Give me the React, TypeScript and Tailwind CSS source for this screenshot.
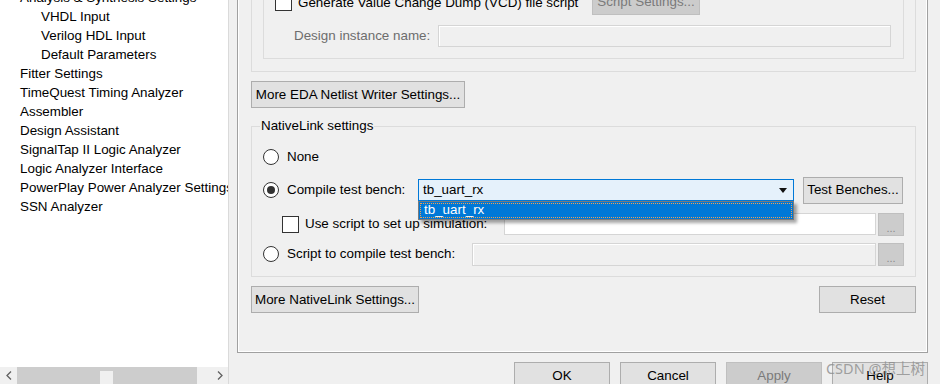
import React from "react"

const tree: [string, number][] = [
  ["Analysis & Synthesis Settings", 1],
  ["VHDL Input", 2],
  ["Verilog HDL Input", 2],
  ["Default Parameters", 2],
  ["Fitter Settings", 1],
  ["TimeQuest Timing Analyzer", 1],
  ["Assembler", 1],
  ["Design Assistant", 1],
  ["SignalTap II Logic Analyzer", 1],
  ["Logic Analyzer Interface", 1],
  ["PowerPlay Power Analyzer Settings", 1],
  ["SSN Analyzer", 1],
]

function Radio({ checked }: { checked?: boolean }) {
  return (
    <span className="w-4 h-4 shrink-0 rounded-full border border-[#333] bg-white flex items-center justify-center">
      {checked && <span className="w-2 h-2 rounded-full bg-[#333]" />}
    </span>
  )
}

function Check() {
  return <span className="w-[17px] h-[17px] shrink-0 border border-[#333] bg-white" />
}

function Btn({ label, className = "", disabled }: { label: string; className?: string; disabled?: boolean }) {
  return (
    <div
      className={`h-[27px] shrink-0 flex items-center justify-center pt-[1px] border ${
        disabled ? "bg-[#cccccc] border-[#bfbfbf] text-[#7a7a7a]" : "bg-[#e1e1e1] border-[#adadad] text-black"
      } ${className}`}
    >
      {label}
    </div>
  )
}

function Dots() {
  return (
    <div className="w-[26px] h-[23px] ml-[2px] shrink-0 bg-[#cccccc] border border-[#bfbfbf] text-[#8a8a8a] text-[11px] flex items-end justify-center pb-[1px] leading-none">
      ...
    </div>
  )
}

export default function App() {
  return (
    <div className="relative w-[940px] h-[384px] overflow-hidden bg-[#f0f0f0] flex font-['Liberation_Sans',Arial,sans-serif] text-[13.4px] text-black">
      {/* Settings tree */}
      <div className="w-[229px] h-full shrink-0 bg-white border-r border-[#dadada] flex flex-col">
        <div className="flex-1 overflow-hidden">
          <div className="-mt-[11px] whitespace-nowrap">
            {tree.map(([name, level], i) => (
              <div key={name} className={`h-[19px] flex items-center relative ${level === 2 ? "pl-[41px]" : "pl-[20px]"}`}>
                {i === 0 && (
                  <svg className="absolute left-[1px] top-[6px]" width="8" height="6" viewBox="0 0 8 6">
                    <path d="M1 1 L4 4 L7 1" fill="none" stroke="#555" strokeWidth="1.2" />
                  </svg>
                )}
                {name}
              </div>
            ))}
          </div>
        </div>
        <div className="h-[17px] flex items-stretch bg-[#f0f0f0]">
          <div className="w-[17px] flex items-center justify-center">
            <svg width="6" height="9" viewBox="0 0 6 9">
              <path d="M5 0.5 L1 4.5 L5 8.5" fill="none" stroke="#606060" strokeWidth="1.3" />
            </svg>
          </div>
          <div className="w-[180px] bg-[#cdcdcd] pt-[4px]">
            <div className="ml-[83px] w-[13px] h-[13px] bg-[#f0f0f0]" />
          </div>
          <div className="flex-1" />
          <div className="w-[17px] flex items-center justify-center">
            <svg width="6" height="9" viewBox="0 0 6 9">
              <path d="M1 0.5 L5 4.5 L1 8.5" fill="none" stroke="#606060" strokeWidth="1.3" />
            </svg>
          </div>
        </div>
      </div>

      {/* Settings page */}
      <div className="flex-1 flex flex-col pl-[8px] pr-[12px]">
        <div className="h-[353px] shrink-0 border-x border-b border-[#a0a0a0] shadow-[inset_1px_0_0_#fff,inset_-1px_-1px_0_#fff] pl-[13px] pr-[11px]">
          {/* EDA netlist writer group (scrolled) */}
          <div className="h-[72px] border-x border-b border-[#dcdcdc] pl-[11px] pr-[11px]">
            <div className="h-[59px] border-x border-b border-[#dcdcdc] flex flex-col justify-end pb-[11px]">
              <div className="h-[22px] mb-[11px] flex items-end pl-[11px]">
                <div className="self-center flex items-center">
                  <Check />
                  <span className="ml-[6px] w-[294px] whitespace-nowrap">Generate Value Change Dump (VCD) file script</span>
                </div>
                <Btn label="Script Settings..." disabled className="w-[108px] -mb-[1px]" />
              </div>
              <div className="h-[22px] flex items-center pl-[30px] pr-[12px]">
                <span className="w-[144px] shrink-0 text-[#6d6d6d] pt-[1px]">Design instance name:</span>
                <div className="flex-1 h-[22px] border border-[#d5d5d5] bg-[#f0f0f0] shadow-[inset_1px_1px_0_#fff]" />
              </div>
            </div>
          </div>

          <Btn label="More EDA Netlist Writer Settings..." className="mt-[9px] w-[214px]" />

          {/* NativeLink settings */}
          <div className="relative mt-[18px] h-[151px] border border-[#dcdcdc] pl-[11px] pr-[11px]">
            <span className="absolute -top-[10px] left-[8px] px-[1px] bg-[#f0f0f0] leading-[18px]">NativeLink settings</span>

            <div className="mt-[19px] h-[22px] flex items-center">
              <Radio />
              <span className="ml-[8px] pt-[1px]">None</span>
            </div>

            <div className="mt-[8px] h-[28px] flex items-center">
              <Radio checked />
              <span className="ml-[8px] w-[131px] shrink-0 pt-[1px]">Compile test bench:</span>
              <div className="relative w-[376px] h-[22px] border border-[#0078d7] bg-[#e5f1fb] flex items-center pl-[4px] pr-[6px]">
                <span className="flex-1 pt-[1px]">tb_uart_rx</span>
                <svg width="8" height="5" viewBox="0 0 8 5">
                  <path d="M0 0 H8 L4 5 Z" fill="#111" />
                </svg>
                <div className="absolute left-[-1px] right-[-1px] top-[21px] h-[19px] z-10 border border-[#7a7a7a] bg-[#0078d7] shadow-[3px_3px_3px_rgba(0,0,0,0.35)] p-[1px]">
                  <div className="h-full border border-dotted border-[#f0a050] text-white flex items-center pl-[3px]">tb_uart_rx</div>
                </div>
              </div>
              <Btn label="Test Benches..." className="ml-[9px] w-[100px]" />
            </div>

            <div className="mt-[9px] h-[22px] flex items-center pl-[19px]">
              <Check />
              <span className="ml-[6px] w-[199px] shrink-0 whitespace-nowrap pt-[1px]">Use script to set up simulation:</span>
              <div className="flex-1 h-[22px] border border-[#d5d5d5] bg-white" />
              <Dots />
            </div>

            <div className="mt-[7px] h-[24px] flex items-center">
              <Radio />
              <span className="ml-[8px] w-[185px] shrink-0 whitespace-nowrap pt-[1px]">Script to compile test bench:</span>
              <div className="flex-1 h-[23px] border border-[#d5d5d5] bg-[#f0f0f0] shadow-[inset_1px_1px_0_#fff]" />
              <Dots />
            </div>
          </div>

          <div className="mt-[9px] flex justify-between">
            <Btn label="More NativeLink Settings..." className="w-[168px]" />
            <Btn label="Reset" className="w-[97px]" />
          </div>
        </div>

        {/* Dialog buttons */}
        <div className="mt-[9px] flex justify-end gap-[10px]">
          <Btn label="OK" className="w-[96px] h-[28px]" />
          <Btn label="Cancel" className="w-[96px] h-[28px]" />
          <Btn label="Apply" disabled className="w-[96px] h-[28px]" />
          <Btn label="Help" className="w-[96px] h-[28px]" />
        </div>
      </div>

      <span className="absolute right-[15px] top-[358px] text-[14.5px] leading-[20px] text-[#8c8c8c]/80 font-['Noto_Sans','Noto_Sans_CJK_SC',sans-serif]">
        CSDN @想上树
      </span>
    </div>
  )
}
